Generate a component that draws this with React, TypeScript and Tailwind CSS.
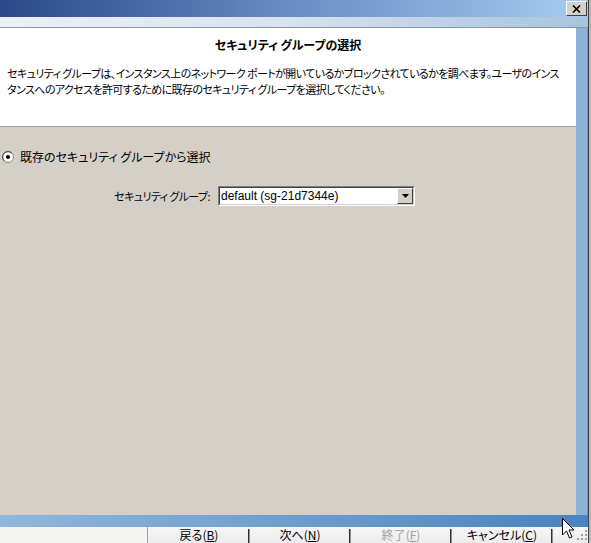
import React from "react";

const jp = "font-['Noto_Sans_CJK_JP','Noto_Sans',sans-serif] [font-feature-settings:'palt']";

function CloseButton() {
  return (
    <div className="w-[21px] h-[15px] mt-[1px] bg-[#d4d0c8] border border-t-white border-l-white border-r-[#404040] border-b-[#404040] flex items-center justify-center">
      <svg width="9" height="8" viewBox="0 0 9 8">
        <path d="M1 0.5 L8 7.5 M8 0.5 L1 7.5" stroke="#000" strokeWidth="1.6" />
      </svg>
    </div>
  );
}

function Radio({ checked }: { checked: boolean }) {
  return (
    <svg width="12" height="12" viewBox="0 0 12 12">
      <circle cx="6" cy="6" r="5.5" fill="#fff" stroke="#808080" />
      <path d="M2.2 9.8 A5 5 0 0 1 9.8 2.2" stroke="#404040" fill="none" />
      {checked && <circle cx="6" cy="6" r="2" fill="#000" />}
    </svg>
  );
}

function SelectBox() {
  return (
    <div className="w-[197px] h-[20px] bg-white border border-t-[#808080] border-l-[#808080] border-r-white border-b-white flex">
      <div className="flex-1 border border-t-[#404040] border-l-[#404040] border-r-[#d4d0c8] border-b-[#d4d0c8] flex items-center pl-[1px]">
        <span className="text-[12px] leading-none text-black font-['Liberation_Sans',sans-serif]">
          default (sg-21d7344e)
        </span>
        <div className="ml-auto w-[16px] h-[16px] bg-[#d4d0c8] border border-t-white border-l-white border-r-[#404040] border-b-[#404040] flex items-center justify-center">
          <svg width="7" height="4" viewBox="0 0 7 4">
            <path d="M0 0 H7 L3.5 4 Z" fill="#000" />
          </svg>
        </div>
      </div>
    </div>
  );
}

function BarButton({ label, mnemonic, disabled }: { label: string; mnemonic: string; disabled?: boolean }) {
  return (
    <div className="flex items-stretch">
      <div
        className={`w-[98px] flex items-center justify-center text-[12px] leading-none ${jp} ${
          disabled ? "text-[#a0a0a0]" : "text-black"
        }`}
      >
        {label}(<span className="underline">{mnemonic}</span>)
      </div>
      <div className="w-[3px] flex mt-[2px]">
        <div className="w-[1px] bg-[#303030]" />
        <div className="w-[1px] bg-[#909090]" />
      </div>
    </div>
  );
}

export default function App() {
  return (
    <div className={`w-[591px] h-[543px] relative overflow-hidden bg-[#c8c8c8] flex ${jp}`}>
      <div className="w-[588px] flex flex-col">
        {/* caption */}
        <div className="h-[17px] bg-gradient-to-r from-[#2c4888] via-[#6a8ec4] to-[#a8cbf2] flex justify-end pr-[1px]">
          <CloseButton />
        </div>
        <div className="h-[11px] bg-gradient-to-r from-[#edf1f7] via-[#d6e2ee] to-[#a7c3dc] border-b border-[#8a9a9c]" />

        <div className="flex-1 flex">
          <div className="w-[576px] flex flex-col">
            {/* page header */}
            <div className="h-[99px] bg-white border-b border-[#a0a0a0] flex flex-col">
              <div className="pt-[9px] text-center text-[12px] leading-[16px] font-bold text-black">
                セキュリティ グループの選択
              </div>
              <div className="mt-[12px] pl-[7px] text-[11px] tracking-[-0.6px] leading-[16px] text-black whitespace-nowrap">
                <div>セキュリティ グループは、インスタンス上のネットワーク ポートが開いているかブロックされているかを調べます。ユーザのインス</div>
                <div>タンスへのアクセスを許可するために既存のセキュリティ グループを選択してください。</div>
              </div>
            </div>

            {/* page body */}
            <div className="flex-1 bg-[#d4d0c8] flex flex-col">
              <div className="mt-[22px] pl-[2px] flex items-center gap-[6px]">
                <Radio checked />
                <span className="text-[12px] leading-[16px] text-black">既存のセキュリティ グループから選択</span>
              </div>
              <div className="mt-[21px] flex items-center">
                <div className="w-[210px] text-right text-[11px] tracking-[-0.6px] leading-[16px] text-black">
                  セキュリティ グループ:
                </div>
                <div className="ml-[8px]">
                  <SelectBox />
                </div>
              </div>
            </div>
          </div>
          <div className="flex-1 bg-[#8cb2d8] border-r border-[#6f93b8]" />
        </div>

        <div className="h-[12px] bg-gradient-to-r from-[#8fb7dc] via-[#6e9dcc] to-[#4a83bf]" />

        {/* wizard buttons */}
        <div className="h-[16px] bg-gradient-to-b from-[#f6f6f6] to-[#ececec] flex">
          <div className="w-[148px] bg-[#f4f4f2] border-r border-[#a0a0a0]" />
          <div className="w-[2px]" />
          <BarButton label="戻る" mnemonic="B" />
          <BarButton label="次へ" mnemonic="N" />
          <BarButton label="終了" mnemonic="F" disabled />
          <BarButton label="キャンセル" mnemonic="C" />
        </div>
      </div>
      <div className="flex-1 bg-[#b8b8b8] border-l border-[#404040]" />

      {/* pointer over the corner */}
      <svg className="absolute left-[562px] top-[518px]" width="13" height="21" viewBox="0 0 13 21">
        <path d="M0.5 0.5 V17 L4.5 13 L7.5 20 L10 19 L7 12 H12 Z" fill="#fff" stroke="#000" strokeWidth="1" />
      </svg>
      {/* size grip */}
      <svg className="absolute left-[577px] top-[530px]" width="12" height="12" viewBox="0 0 12 12">
        {[
          [8, 0],
          [8, 4],
          [4, 4],
          [8, 8],
          [4, 8],
          [0, 8],
        ].map(([x, y], i) => (
          <rect key={i} x={x} y={y} width="2" height="2" fill="#a0a0a0" />
        ))}
      </svg>
    </div>
  );
}
